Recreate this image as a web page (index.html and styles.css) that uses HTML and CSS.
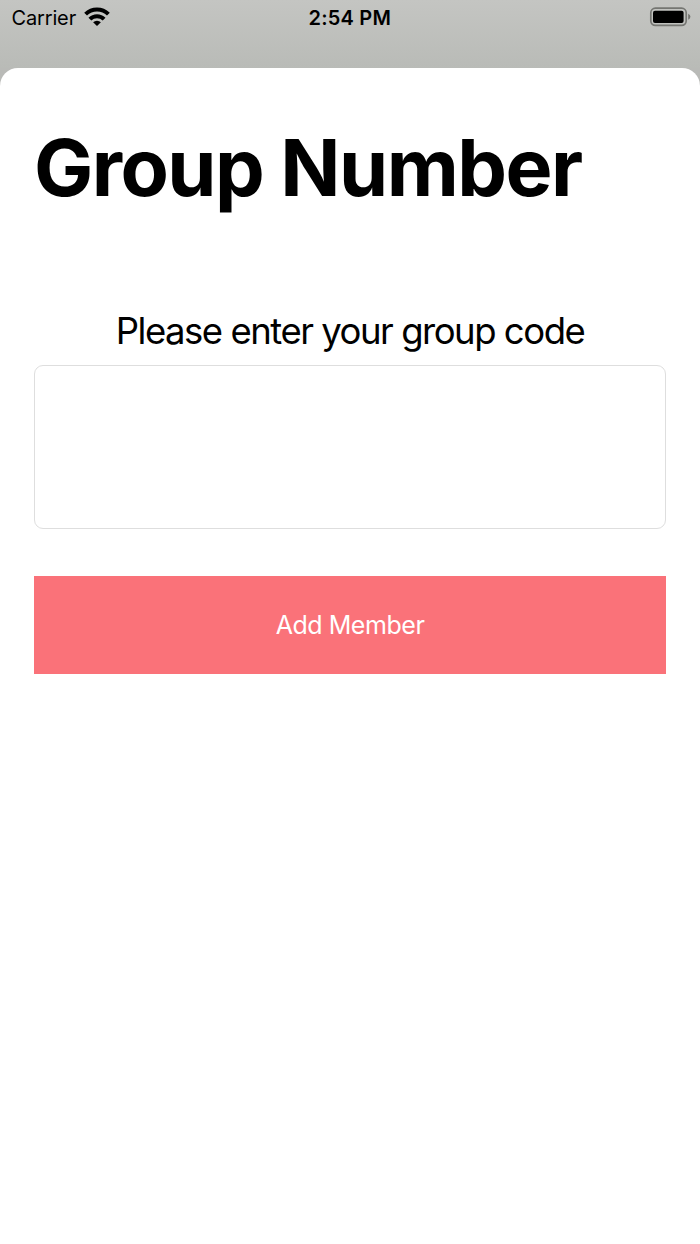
FILE: index.html
```html
<!DOCTYPE html>
<html lang="en">
<head>
<meta charset="utf-8">
<title>Group Number</title>
<link rel="stylesheet" href="styles.css">
</head>
<body>
<header class="status">
  <div class="status-left"><span class="carrier">Carrier</span>
    <svg class="wifi" viewBox="0 0 26 19" width="26" height="19"><g fill="none" stroke="#000" stroke-width="4"><path d="M1.6 7.2a16.2 16.2 0 0 1 22.8 0"/><path d="M5.9 12.2a10 10 0 0 1 14.2 0"/></g><path d="M13 19l-3.9-3.7a5.6 5.6 0 0 1 7.8 0z"/></svg>
  </div>
  <time class="time">2:54 PM</time>
  <div class="status-right">
    <svg class="battery" viewBox="0 0 42 20" width="42" height="20"><rect x="1.8" y="1.2" width="35.4" height="17.2" rx="4.6" fill="none" stroke="#757672" stroke-width="1.7"/><rect x="4" y="3.8" width="30.6" height="12.3" rx="2"/><path d="M39.2 6.8q2.2 1 2.2 3t-2.2 3z" fill="#72736f"/></svg>
  </div>
</header>
<main class="sheet">
  <h1 class="title">Group Number</h1>
  <label class="prompt" for="code">Please enter your group code</label>
  <input class="code" id="code" type="text">
  <button class="add" type="button"><span class="add-label">Add Member</span></button>
</main>
</body>
</html>
```
FILE: styles.css
```css
* { box-sizing: border-box; }
body { margin: 0; height: 1244px; background: #b9bab7; color: #000; font-family: Inter, sans-serif; display: flex; flex-direction: column; overflow: hidden; }
.status { height: 68px; padding: 5px 9px 0 11.5px; display: grid; grid-template-columns: 297px auto 1fr; align-items: start; background: linear-gradient(#c4c5c2, #b9bbb7); }
.status-left { display: flex; gap: 8px; }
.carrier { font-size: 20px; line-height: 26px; letter-spacing: -0.15px; }
.wifi { margin-top: 2px; }
.time { font-size: 20px; line-height: 26px; font-weight: 600; letter-spacing: 0.2px; }
.status-right { display: flex; justify-content: flex-end; padding-top: 2px; }
.sheet { flex: 1; background: #fff; border-radius: 18px 18px 0 0; padding: 50px 34px 0; display: flex; flex-direction: column; }
.title { margin: 0; font-size: 79px; line-height: 98px; font-weight: 700; letter-spacing: -1.55px; white-space: nowrap; }
.prompt { margin-top: 92px; text-align: center; font-size: 36.5px; line-height: 46px; letter-spacing: -1.48px; }
.code { margin-top: 11px; width: 632px; height: 164px; border: 1px solid #dedede; border-radius: 9px; background: #fff; }
.add { margin-top: 47px; height: 98px; border: 0; border-radius: 0; background: #fa7279; color: #fff; font: 25px/32px Inter, sans-serif; letter-spacing: -0.45px; }
```
